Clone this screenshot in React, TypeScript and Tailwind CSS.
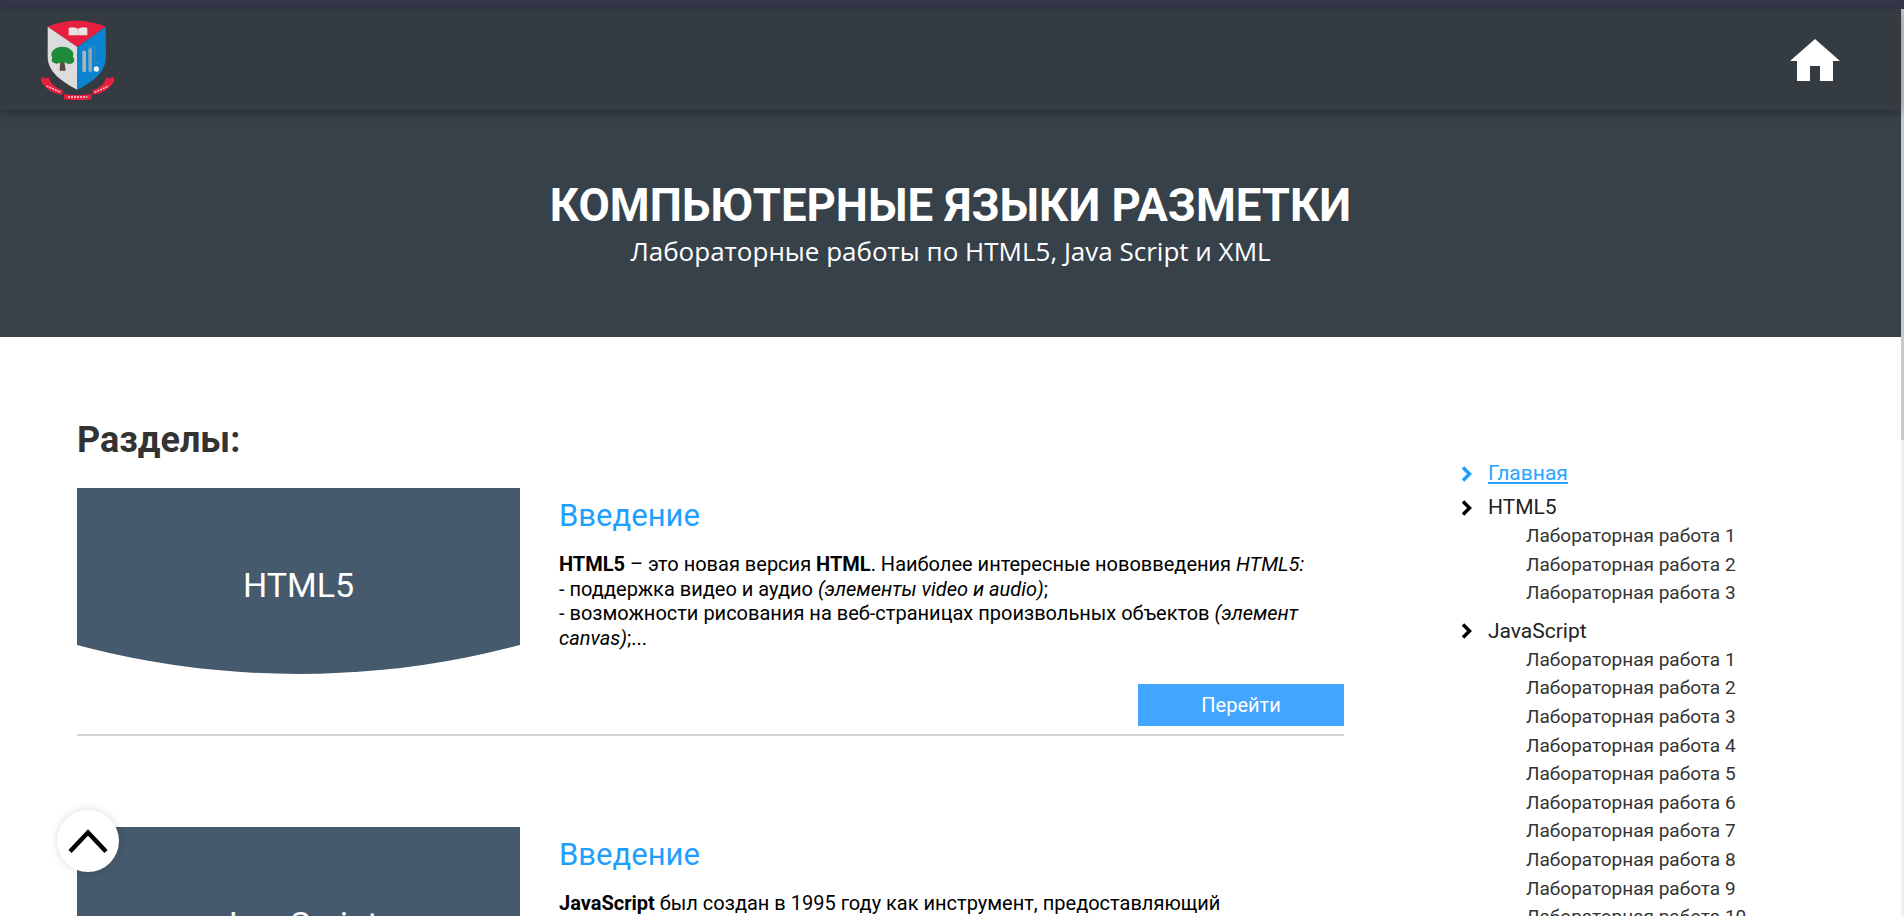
import { ReactNode } from "react";

function Logo() {
  return (
    <svg width="75" height="80" viewBox="120 60 225 240" aria-hidden="true">
      <path d="M143 80 Q230 45 317 80 L232 141 Z" fill="#e8203f" />
      <path d="M143 80 L232 141 V269 C185 245 143 215 143 170 Z" fill="#dcdcdc" />
      <path d="M317 80 L232 141 V269 C280 245 318 215 318 170 Z" fill="#0a84d0" />
      <path d="M206 84 Q220 78 234 86 Q248 78 262 84 V106 H206 Z" fill="#e9e4e4" />
      <path d="M234 86 V106" stroke="#c9a9a9" strokeWidth="2" />
      <path d="M181 176 L179 212 H197 L192 176 Z" fill="#5b4a3c" />
      <ellipse cx="187" cy="164" rx="33" ry="24" fill="#1f8a3a" />
      <ellipse cx="170" cy="180" rx="15" ry="11" fill="#1f8a3a" />
      <ellipse cx="208" cy="180" rx="15" ry="12" fill="#1f8a3a" />
      <rect x="247" y="152" width="11" height="64" rx="4" fill="#a9b4bd" />
      <rect x="265" y="145" width="11" height="71" rx="4" fill="#8fa3b3" />
      <path d="M262 140 H284 M284 140 V190 H296" stroke="#5a8fb5" strokeWidth="2" fill="none" />
      <circle cx="289" cy="207" r="8" fill="#f2f2f2" />
      <path d="M127 230 L136 236 L146 232 C152 254 170 266 188 270 V284 C160 282 135 268 122 240 Z" fill="#e8203f" />
      <path d="M192 282 C215 286 250 286 274 282 V298 C250 301 215 301 192 298 Z" fill="#e8203f" />
      <path d="M338 230 L329 236 L319 232 C313 254 295 266 278 270 V284 C305 282 330 268 344 240 Z" fill="#e8203f" />
      <path d="M140 258 L182 277 M204 291 H262 M284 277 L326 258" stroke="#f6d8dc" strokeWidth="4" strokeDasharray="6 3" fill="none" />
    </svg>
  );
}

function Chevron({ className }: { className: string }) {
  return (
    <svg width="11" height="16" viewBox="0 0 11 16" className={className} aria-hidden="true">
      <path d="M2 1.5 L8.5 8 L2 14.5" fill="none" stroke="currentColor" strokeWidth="3.5" />
    </svg>
  );
}

function SectionCard({ label, children, last }: { label: string; children: ReactNode; last?: boolean }) {
  return (
    <article className={last ? "" : "border-b-2 border-[#d3d3d3] pb-[8px] mb-[91px]"}>
      <div className="flex gap-[39px]">
        <div className="w-[443px] h-[186px] shrink-0 bg-[#465a6d] flex items-center justify-center text-white text-[34px] pt-[9px] [clip-path:circle(860px_at_50%_-674px)]">
          {label}
        </div>
        <div className="flex-1 pt-[8px]">
          <h3 className="text-[31px] leading-[40px] text-[#1e9fff]">Введение</h3>
          <div className="mt-[16px] text-[20px] leading-[24.5px] text-black">{children}</div>
        </div>
      </div>
      {!last && (
        <div className="flex justify-end mt-[10px]">
          <a className="w-[206px] h-[42px] bg-[#42a5ff] text-white text-[20px] flex items-center justify-center">Перейти</a>
        </div>
      )}
    </article>
  );
}

function SideGroup({ title, count }: { title: string; count: number }) {
  return (
    <li className="mb-[9px]">
      <div className="flex items-center h-[29px] text-[21px] text-[#222]">
        <Chevron className="text-black" />
        <span className="ml-[16px]">{title}</span>
      </div>
      <ul className="pl-[65px]">
        {Array.from({ length: count }, (_, i) => (
          <li key={i} className="h-[28.6px] leading-[28.6px] text-[19px] text-[#333]">
            Лабораторная работа {i + 1}
          </li>
        ))}
      </ul>
    </li>
  );
}

export default function App() {
  return (
    <div className="h-screen overflow-hidden bg-white flex flex-col font-['Roboto',sans-serif] relative">
      <div className="h-[9px] shrink-0 bg-[#333748]" />
      <div className="flex flex-1 min-h-0">
        <div className="flex-1 min-w-0">
          <header className="relative z-10 h-[101px] bg-[#343b41] shadow-[0_3px_8px_rgba(0,0,0,0.3)] flex items-center justify-between pl-[40px] pr-[61px]">
            <Logo />
            <svg width="50" height="42" viewBox="0 0 50 42" aria-label="home">
              <path d="M25 0 L50 22 H43 V42 H30 V27 H20 V42 H7 V22 H0 Z" fill="#fff" />
            </svg>
          </header>

          <section className="h-[227px] bg-[#37414a] text-white text-center pt-[70px]">
            <h1 className="text-[45.5px] leading-[52px] font-bold">КОМПЬЮТЕРНЫЕ ЯЗЫКИ РАЗМЕТКИ</h1>
            <p className="text-[26px] leading-[36px] font-['Open_Sans',sans-serif] mt-[1px]">
              Лабораторные работы по HTML5, Java Script и XML
            </p>
          </section>

          <div className="flex pl-[77px] pt-[82px]">
            <main className="w-[1267px] shrink-0">
              <h2 className="text-[36px] leading-[42px] font-bold text-[#333] mb-[27px]">Разделы:</h2>
              <SectionCard label="HTML5">
                <p>
                  <b>HTML5</b> – это новая версия <b>HTML</b>. Наиболее интересные нововведения <i>HTML5:</i>
                  <br />- поддержка видео и аудио <i>(элементы video и audio)</i>;
                  <br />- возможности рисования на веб-страницах произвольных объектов <i>(элемент canvas)</i>;...
                </p>
              </SectionCard>
              <SectionCard label="JavaScript" last>
                <p>
                  <b>JavaScript</b> был создан в 1995 году как инструмент, предоставляющий
                </p>
              </SectionCard>
            </main>

            <aside className="ml-[117px] pt-[40px] flex-1">
              <ul>
                <li className="mb-[5px] flex items-center h-[29px] text-[21px] text-[#2aa5ff]">
                  <Chevron className="text-[#1e9fff]" />
                  <a className="ml-[16px] underline">Главная</a>
                </li>
                <SideGroup title="HTML5" count={3} />
                <SideGroup title="JavaScript" count={10} />
              </ul>
            </aside>
          </div>
        </div>

        <div className="w-[3px] shrink-0 bg-[#f1f1f1]">
          <div className="h-[431px] bg-[#c8c8c8]" />
        </div>
      </div>

      <button className="absolute left-[57px] top-[810px] w-[62px] h-[62px] rounded-full bg-white shadow-[0_0_8px_rgba(0,0,0,0.15)] flex items-center justify-center">
        <svg width="40" height="25" viewBox="0 0 40 25" aria-hidden="true">
          <path d="M2 22.5 L20 3.5 L38 22.5" fill="none" stroke="#000" strokeWidth="4.5" />
        </svg>
      </button>
    </div>
  );
}
